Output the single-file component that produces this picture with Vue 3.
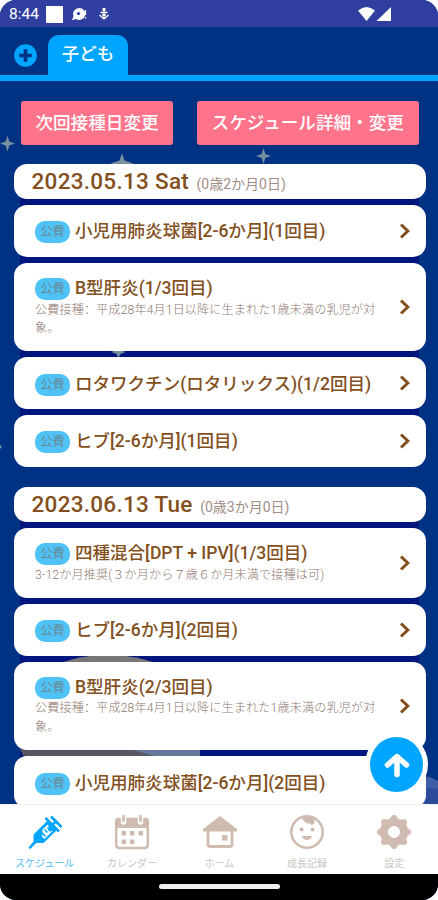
<template>
  <div class="phone">
    <!-- ステータスバー -->
    <div class="status-bar">
      <span class="clock">8:44</span>
      <span class="status-square"></span>
      <svg class="status-chat" viewBox="0 0 16 14">
        <path d="M8 1a6 6 0 1 1-3 11L1 13.200 2.500 9A6 6 0 0 1 8 1z" fill="#fff" />
        <circle cx="7.500" cy="6.500" r="1.600" fill="#303f9f" />
        <path d="M14.500 3v5M14.500 10v1.500" stroke="#fff" stroke-width="1.300" />
      </svg>
      <svg class="status-usb" viewBox="0 0 12 14">
        <circle cx="6" cy="2.500" r="1.700" fill="#fff" />
        <path d="M6 3v9M2.500 5.500h7M1.500 8l4.500 4 4.500-4M4 8h4" fill="none" stroke="#fff" stroke-width="1.300" />
      </svg>
      <span class="status-space"></span>
      <svg class="status-signal" viewBox="0 0 36 16">
        <path d="M1 4.500Q9.500-2.500 18 4.500L9.500 15z" fill="#fff" />
        <path d="M34 1v14H19.500z" fill="#fff" />
      </svg>
    </div>

    <!-- 子どもタブ -->
    <div class="child-tabs">
      <button class="add-btn">
        <svg viewBox="0 0 24 24">
          <circle cx="12" cy="12" r="11.800" fill="#00a5ff" />
          <path d="M12 5.500v13M5.500 12h13" stroke="#003283" stroke-width="3.800" />
        </svg>
      </button>
      <div class="child-tab">子ども</div>
    </div>

    <main class="content">
      <!-- 夜空の背景 -->
      <svg class="sky" viewBox="0 0 438 723">
        <path d="M20 110h399v270H20zM20 433h399v290H20z" fill="#00167f" />
        <g fill="#7790a0">
          <path d="M7.500 54.500l1.800 6 5.700 2-5.700 2-1.800 6-1.800-6-5.700-2 5.700-2z" />
          <path d="M263.500 67l1.800 6 5.700 2-5.700 2-1.800 6-1.800-6-5.700-2 5.700-2z" />
          <path d="M122 72l2.500 7.500 9 3-9 3-2.500 7-2.500-7-9-3 9-3z" />
          <path d="M118.500 262l2 7 5 2-5 2-2 4-2-4-5-2 5-2z" />
          <path d="M0 364l2 2-2 2z" />
        </g>
        <ellipse cx="108" cy="630" rx="92" ry="56" fill="#777779" />
        <path d="M20 668h180v12H26z" fill="#555764" />
        <path d="M130 668h70v8h-42z" fill="#67799d" />
        <path d="M405 723q8-27 23-27l10 6v21z" fill="#2d4b9b" />
        <path d="M420 706l8-11 10 5v8z" fill="#405ca4" />
      </svg>

      <div class="actions">
        <button class="action-btn next-btn">次回接種日変更</button>
        <button class="action-btn detail-btn">スケジュール詳細・変更</button>
      </div>

      <section v-for="day in schedule" :key="day.date" class="day">
        <div class="day-head">
          <span class="day-date">{{ day.date }}</span>
          <span class="day-age">{{ day.age }}</span>
        </div>
        <div v-for="item in day.items" :key="item.name" class="card" :class="item.size">
          <div class="card-body">
            <div class="card-title">
              <span class="badge">公費</span>
              <span class="vaccine">{{ item.name }}</span>
            </div>
            <div v-if="item.note" class="note" lang="zh-CN">{{ item.note }}</div>
          </div>
          <svg class="chevron" viewBox="0 0 12 16">
            <path d="M2 1.500L8.800 8 2 14.500" fill="none" stroke="#83501d" stroke-width="3" />
          </svg>
        </div>
      </section>
    </main>

    <button class="top-btn">
      <svg viewBox="0 0 26 26">
        <path d="M13 22.500V5M3.500 13L13 4.500 22.500 13" fill="none" stroke="#fff" stroke-width="5.500" stroke-linecap="round" stroke-linejoin="round" />
      </svg>
    </button>

    <!-- 下部ナビゲーション -->
    <nav class="bottom-nav">
      <div v-for="(tab, i) in tabs" :key="tab" class="nav-item" :class="{ active: i === 0 }">
        <svg v-if="i === 0" class="nav-icon" viewBox="0 0 36 36">
          <path d="M6.500 20.500L21 6l9.500 9.500L16.500 29H9.500L3 35 1.500 33.500l5-6z" fill="#00a5ff" />
          <path d="M18.500 4L32 17.500M24 2.500L34.500 13M25 11l5-4.500" fill="none" stroke="#00a5ff" stroke-width="2.500" />
          <path d="M15.500 15.500l5.500-5 1.500 6 3 .5-8 8-2.500-2.500z" fill="#fff" />
          <path d="M17.500 15.500l3 3M14.500 18.500l4 4M20.500 13.500l3 4" stroke="#00a5ff" stroke-width="1.600" />
        </svg>
        <svg v-else-if="i === 1" class="nav-icon" viewBox="0 0 36 36">
          <rect x="2.200" y="5" width="31.600" height="29" rx="3" fill="none" stroke="#d0bbb0" stroke-width="2.500" />
          <path d="M1 14V7q0-3 3-3h28q3 0 3 3v7z" fill="#d0bbb0" />
          <path d="M9.500 1v7M26.500 1v7" stroke="#fff" stroke-width="5.500" stroke-linecap="round" />
          <path d="M9.500 2v5M26.500 2v5" stroke="#d0bbb0" stroke-width="2.500" stroke-linecap="round" />
          <path d="M7.500 17h4.500v4.500H7.500zM16 17h4.500v4.500H16zM24.500 17H29v4.500h-4.500zM7.500 25.500h4.500V30H7.500zM16 25.500h4.500V30H16z" fill="#d0bbb0" />
        </svg>
        <svg v-else-if="i === 2" class="nav-icon" viewBox="0 0 36 36">
          <path d="M1 17.500V15L18 2l17 13v2.500z" fill="#d0bbb0" />
          <path d="M6 15v15.500q0 2 2 2h20q2 0 2-2V15" fill="none" stroke="#d0bbb0" stroke-width="2.800" />
          <path d="M20 21h5.500v5.500H20z" fill="#d0bbb0" />
        </svg>
        <svg v-else-if="i === 3" class="nav-icon" viewBox="0 0 36 36">
          <circle cx="18" cy="18" r="15.700" fill="none" stroke="#d0bbb0" stroke-width="2.600" />
          <path d="M13 3h12q2 7-2 8-2 0-2-2-1 1-3 0-4-1-5-6z" fill="#d0bbb0" />
          <circle cx="12.500" cy="15.500" r="2.100" fill="#d0bbb0" />
          <circle cx="23.500" cy="15.500" r="2.100" fill="#d0bbb0" />
          <path d="M13 22h10q-1 4-5 4t-5-4z" fill="#d0bbb0" />
        </svg>
        <svg v-else class="nav-icon" viewBox="0 0 36 36">
          <circle cx="18" cy="18" r="10" fill="none" stroke="#d0bbb0" stroke-width="8" />
          <g fill="#d0bbb0">
            <path v-for="a in 8" :key="a" d="M12.500 7L16 1.500q2-1.500 4 0L23.500 7z" :transform="`rotate(${a * 45} 18 18)`" />
          </g>
        </svg>
        <span class="nav-label">{{ tab }}</span>
      </div>
    </nav>
    <div class="gesture-bar"><span class="gesture-pill"></span></div>
  </div>
</template>

<script setup>
// B型肝炎の注記
const hepatitisNote = "公費接種：平成28年4月1日以降に生まれた1歳未満の乳児が対象。";

const schedule = [
  {
    date: "2023.05.13 Sat",
    age: "(0歳2か月0日)",
    items: [
      { name: "小児用肺炎球菌[2-6か月](1回目)" },
      { name: "B型肝炎(1/3回目)", note: hepatitisNote, size: "tall" },
      { name: "ロタワクチン(ロタリックス)(1/2回目)" },
      { name: "ヒブ[2-6か月](1回目)" },
    ],
  },
  {
    date: "2023.06.13 Tue",
    age: "(0歳3か月0日)",
    items: [
      {
        name: "四種混合[DPT + IPV](1/3回目)",
        note: "3-12か月推奨(３か月から７歳６か月未満で接種は可)",
        size: "middle",
      },
      { name: "ヒブ[2-6か月](2回目)" },
      { name: "B型肝炎(2/3回目)", note: hepatitisNote, size: "tall" },
      { name: "小児用肺炎球菌[2-6か月](2回目)" },
    ],
  },
];

const tabs = ["スケジュール", "カレンダー", "ホーム", "成長記録", "設定"];
</script>

<style>
body {
  background: #fff;
}
</style>

<style scoped>
.phone {
  position: relative;
  display: flex;
  flex-direction: column;
  width: 438px;
  height: 900px;
  overflow: hidden;
  border-radius: 16px;
  background: #003283;
  font-family: Roboto, "Noto Sans CJK JP", sans-serif;
}

button {
  padding: 0;
  border: none;
  font-family: inherit;
}

/* ステータスバー */
.status-bar {
  flex: none;
  display: flex;
  align-items: center;
  height: 27px;
  padding: 1px 45px 0 9px;
  box-sizing: border-box;
  background: #303f9f;
  color: #fff;
}

.clock {
  width: 37px;
  font-size: 15.5px;
}

.status-square {
  width: 17px;
  height: 17px;
  background: #fff;
}

.status-chat {
  width: 16px;
  height: 14px;
  margin-left: 8px;
}

.status-usb {
  width: 12px;
  height: 14px;
  margin-left: 11px;
}

.status-space {
  flex: 1;
}

.status-signal {
  width: 36px;
  height: 16px;
}

/* タブ */
.child-tabs {
  flex: none;
  display: flex;
  align-items: flex-end;
  height: 54px;
  padding-left: 14px;
  box-sizing: border-box;
  border-bottom: 6px solid #00a5ff;
}

.add-btn {
  width: 23px;
  height: 23px;
  margin: 0 11px 8px 0;
  background: none;
}

.add-btn svg {
  display: block;
}

.child-tab {
  width: 80px;
  height: 40px;
  border-radius: 11px 11px 0 0;
  background: #00a5ff;
  color: #fff;
  font-size: 17.5px;
  font-weight: 500;
  line-height: 38px;
  text-align: center;
}

/* スケジュール一覧 */
.content {
  flex: 1;
  position: relative;
  min-height: 0;
  padding: 20px 12.5px 0 13.5px;
  overflow: hidden;
}

.sky {
  position: absolute;
  top: 0;
  left: 0;
  width: 438px;
  height: 723px;
}

.actions {
  position: relative;
  display: flex;
  justify-content: space-between;
  padding: 0 7px 0 7.5px;
  margin-bottom: 19px;
}

.action-btn {
  height: 44px;
  padding: 0 0 4px;
  border-radius: 3px;
  background: #ff748b;
  color: #fff;
  font-size: 17.6px;
  font-weight: 500;
}

.next-btn {
  width: 152px;
}

.detail-btn {
  width: 221.5px;
}

.day {
  position: relative;
  display: flex;
  flex-direction: column;
  gap: 6px;
  margin-bottom: 20px;
}

.day-head {
  display: flex;
  align-items: baseline;
  height: 35px;
  padding-left: 18px;
  box-sizing: border-box;
  border-radius: 13px;
  background: #fff;
  line-height: 35px;
}

.day-date {
  color: #83501d;
  font-size: 22.5px;
  font-weight: 500;
  letter-spacing: 0.28px;
}

.day-age {
  margin-left: 7.5px;
  color: #a18d86;
  font-size: 14px;
}

.card {
  display: flex;
  align-items: center;
  justify-content: space-between;
  height: 51.8px;
  padding: 0 15px 0 21.5px;
  box-sizing: border-box;
  border-radius: 13px;
  background: #fff;
}

.middle {
  height: 70px;
}

.tall {
  height: 88.5px;
}

.card-body {
  width: 352px;
}

.card-title {
  display: flex;
  align-items: center;
  height: 24px;
}

.badge {
  width: 35px;
  height: 22px;
  margin: 3px 5px 0 0;
  border-radius: 10px;
  background: #4fc3f7;
  color: #6c858f;
  font-size: 12px;
  line-height: 22px;
  text-align: center;
}

.vaccine {
  padding-bottom: 2px;
  color: #83501d;
  font-size: 17.55px;
  font-weight: 500;
  white-space: nowrap;
}

.tall .card-title,
.middle .card-title {
  height: 24px;
}

.note {
  padding-top: 1px;
  color: #8f7870;
  font-family: Roboto, "Noto Sans CJK SC", sans-serif;
  font-size: 12.1px;
  font-weight: 300;
  letter-spacing: 0.15px;
  line-height: 18.5px;
}

.tall .card-body,
.middle .card-body {
  padding-bottom: 1px;
}

.chevron {
  flex: none;
  width: 12px;
  height: 16px;
}

/* トップへ戻る */
.top-btn {
  position: absolute;
  left: 365px;
  top: 732px;
  display: flex;
  align-items: center;
  justify-content: center;
  width: 63px;
  height: 65px;
  border: 5px solid #fff;
  border-radius: 50%;
  background: #00a5ff;
}

.top-btn svg {
  width: 26px;
  height: 26px;
}

/* 下部ナビゲーション */
.bottom-nav {
  flex: none;
  position: relative;
  display: flex;
  height: 70px;
  padding-left: 1px;
  border-top: 1px solid #f3f0f0;
  box-sizing: border-box;
  background: #fff;
}

.nav-item {
  flex: 1;
  display: flex;
  flex-direction: column;
  align-items: center;
  padding-top: 9px;
  color: #c9c5c3;
}

.nav-item.active {
  color: #4dbaf5;
}

.nav-icon {
  width: 36px;
  height: 36px;
}

.nav-label {
  margin-top: 6px;
  font-size: 10px;
  line-height: 15px;
}

.gesture-bar {
  flex: none;
  display: flex;
  justify-content: center;
  height: 26px;
  padding-top: 10px;
  box-sizing: border-box;
  background: #000;
}

.gesture-pill {
  width: 121px;
  height: 5px;
  border-radius: 3px;
  background: #eee;
}
</style>
